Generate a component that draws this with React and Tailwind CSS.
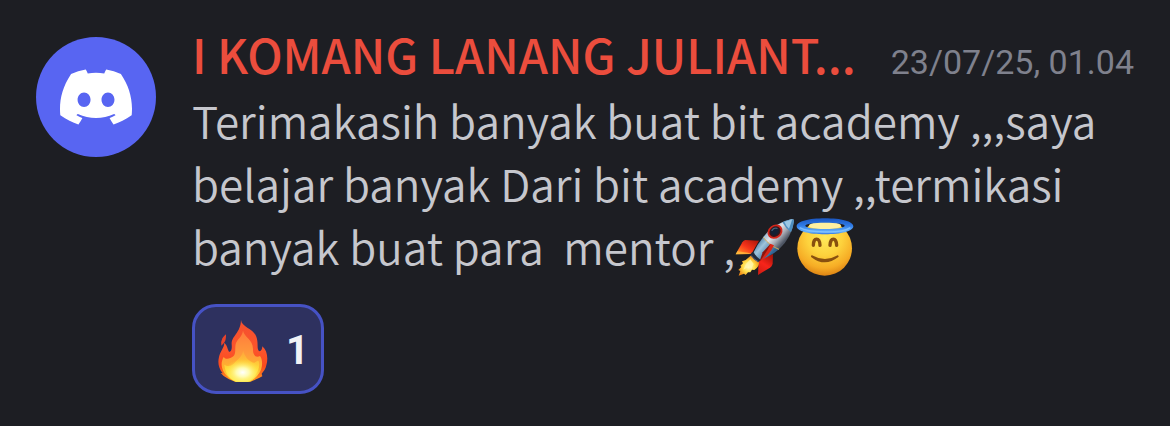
import { SiDiscord } from "react-icons/si";

function Rocket() {
  return (
    <svg role="img" aria-label="rocket" viewBox="45 22 180 180" className="inline-block size-15 align-[-12px]">
      <defs>
        <linearGradient id="hull" gradientUnits="userSpaceOnUse" x1="122" y1="62" x2="178" y2="112">
          <stop offset="0" stopColor="#3f7199" />
          <stop offset="0.2" stopColor="#8fb4cc" />
          <stop offset="0.5" stopColor="#e0e3e8" />
          <stop offset="0.75" stopColor="#a5a9b3" />
          <stop offset="1" stopColor="#4d5563" />
        </linearGradient>
        <linearGradient id="tail" gradientUnits="userSpaceOnUse" x1="100" y1="95" x2="150" y2="138">
          <stop offset="0" stopColor="#2d608c" />
          <stop offset="0.45" stopColor="#9ec4dc" />
          <stop offset="1" stopColor="#2f6492" />
        </linearGradient>
        <linearGradient id="finL" x1="1" y1="0" x2="0" y2="1">
          <stop offset="0.1" stopColor="#b51a0c" />
          <stop offset="0.5" stopColor="#f5331a" />
          <stop offset="0.75" stopColor="#ff6a20" />
          <stop offset="1" stopColor="#ffc53a" />
        </linearGradient>
        <linearGradient id="finR" x1="0.7" y1="0" x2="0.2" y2="1">
          <stop offset="0" stopColor="#a81409" />
          <stop offset="0.5" stopColor="#f8241a" />
          <stop offset="1" stopColor="#cf1d14" />
        </linearGradient>
        <radialGradient id="jet" cx="0.5" cy="0.55" r="0.55">
          <stop offset="0" stopColor="#fffbd0" />
          <stop offset="0.5" stopColor="#ffdf4a" />
          <stop offset="1" stopColor="#f18a14" />
        </radialGradient>
      </defs>
      <path d="M117 93 76 91Q71 92 67 98L47 134 94 133Z" fill="url(#finL)" />
      <path d="M47 134 52 125 84 129 94 133Z" fill="#ffc040" opacity=".7" />
      <path d="M159 133 158 162Q157 168 150 174L114 196 116 153Z" fill="url(#finR)" />
      <path d="M92 138 117 155Q119 172 103 181L96 180 91 188 84 188 77 196 72 192 56 198 61 184 55 181 64 172 61 168 69 161 66 155 77 151Z" fill="url(#jet)" />
      <path d="M78 163 70 180 86 171 94 178 101 163 91 149Z" fill="#fff6ad" opacity=".8" />
      <path d="M91 134Q97 127 104 124L126 145Q122 153 114 158Q99 149 91 134Z" fill="#222a3b" />
      <path d="M93 137 Q101 149 115 156" stroke="#59657e" strokeWidth="3" fill="none" />
      <path d="M101 128Q111 105 130 82L178 118Q156 137 122 151Q108 141 101 128Z" fill="url(#tail)" />
      <path d="M129 83Q157 43 215 28Q222 27 222 35Q215 84 177 119Q149 109 129 83Z" fill="url(#hull)" />
      <path d="M187 38Q203 30 216 28Q222 28 222 34Q220 51 213 68Q197 56 187 38Z" fill="#4e8fc0" />
      <path d="M193 36 217 29 207 57Q198 49 193 36Z" fill="#9bc7e4" />
      <path d="M130 83Q149 109 177 119" fill="none" stroke="#d3ab57" strokeWidth="3" />
      <path d="M151 102 162 107 154 122Q143 139 118 157 130 124Z" fill="#da2618" />
      <path d="M151 103Q146 119 118 157L128 128Z" fill="#8c130c" />
      <ellipse cx="165" cy="66" rx="24" ry="20" transform="rotate(-38 165 66)" fill="#d3261b" />
      <ellipse cx="165" cy="66" rx="18" ry="15" transform="rotate(-38 165 66)" fill="#35171b" />
      <ellipse cx="164" cy="65" rx="13" ry="11" transform="rotate(-38 164 65)" fill="#142033" />
      <path d="M156 62Q161 54 171 56" stroke="#46627b" strokeWidth="4" fill="none" strokeLinecap="round" />
    </svg>
  );
}

function Angel() {
  return (
    <svg role="img" aria-label="smiling face with halo" viewBox="226 22 180 180" className="inline-block size-15 align-[-12px]">
      <defs>
        <radialGradient id="skin" cx="0.5" cy="0.3" r="0.72">
          <stop offset="0" stopColor="#ffe95a" />
          <stop offset="0.45" stopColor="#fdd23d" />
          <stop offset="0.78" stopColor="#f6ac25" />
          <stop offset="1" stopColor="#d97e12" />
        </radialGradient>
        <linearGradient id="halo" x1="0" y1="0" x2="0" y2="1">
          <stop offset="0" stopColor="#1b55be" />
          <stop offset="0.45" stopColor="#2f7be6" />
          <stop offset="0.85" stopColor="#67b3ff" />
          <stop offset="1" stopColor="#2a6de0" />
        </linearGradient>
      </defs>
      <circle cx="315" cy="116" r="82" fill="url(#skin)" />
      <ellipse cx="316" cy="48" rx="48" ry="11" fill="#fff0a0" />
      <path fillRule="evenodd" d="M231 50C231 35 268 26 316 26S401 35 401 50 364 74 316 74 231 65 231 50ZM257 48C257 54 282 58 316 58S375 54 375 48 350 39 316 39 257 42 257 48Z" fill="url(#halo)" />
      <path d="M240 54Q260 66 316 67T392 54" fill="none" stroke="#8ac8ff" strokeWidth="4" opacity=".75" />
      <g fill="none" stroke="#88500f" strokeLinecap="round">
        <path d="M281 107C281 82 300 82 301 107" strokeWidth="10" />
        <path d="M331 107C332 82 350 82 351 107" strokeWidth="10" />
        <path d="M277 140Q316 170 354 140Q316 162 277 140" strokeWidth="6" fill="#88500f" strokeLinejoin="round" />
      </g>
    </svg>
  );
}

function Fire() {
  return (
    <svg role="img" aria-label="fire" viewBox="94 72 180 186" className="h-[62px] w-15">
      <defs>
        <linearGradient id="flame" x1="0" y1="0" x2="0" y2="1">
          <stop offset="0" stopColor="#f4502f" />
          <stop offset="0.5" stopColor="#fb542b" />
          <stop offset="0.75" stopColor="#fa4a1c" />
          <stop offset="1" stopColor="#ff9a20" />
        </linearGradient>
        <linearGradient id="inner" x1="0" y1="0" x2="0" y2="1">
          <stop offset="0" stopColor="#ff7a3c" />
          <stop offset="0.45" stopColor="#ff9a3c" />
          <stop offset="0.75" stopColor="#ffb52d" />
          <stop offset="1" stopColor="#ffe23c" />
        </linearGradient>
        <linearGradient id="glow" x1="0" y1="0" x2="0" y2="1">
          <stop offset="0" stopColor="#ffb53a" stopOpacity="0.4" />
          <stop offset="0.6" stopColor="#ffdc3a" />
          <stop offset="1" stopColor="#fff05a" />
        </linearGradient>
        <radialGradient id="core" cx="0.5" cy="0.6" r="0.55">
          <stop offset="0" stopColor="#ffffff" />
          <stop offset="0.35" stopColor="#fffbb0" />
          <stop offset="1" stopColor="#ffe637" stopOpacity="0" />
        </radialGradient>
      </defs>
      <path d="M133 115Q134 133 126 142 121 148 119 149 117 137 122 127 127 120 133 115Z" fill="#e8432b" />
      <path d="M178 72C180 94 214 96 224 122C230 138 226 153 230 163C235 170 242 162 242 151C257 163 260 187 254 208C252 219 246 226 240 233L242 241Q226 250 207 257H160Q139 250 126 240L117 231 123 232C110 216 108 199 112 183C116 166 128 154 128 140C137 149 138 160 142 167C150 168 151 155 150 145C149 119 177 112 178 72Z" fill="url(#flame)" />
      <path d="M184 104C188 124 214 130 214 159C213 178 223 187 235 180C245 193 242 218 233 231Q221 248 204 257H162Q139 247 128 230C116 212 119 195 126 183C132 192 145 189 155 181C164 172 159 158 162 144C165 130 181 124 184 104Z" fill="url(#inner)" />
      <path d="M184 163C190 183 198 192 211 199C222 204 225 190 231 195C239 219 217 249 199 257H164C139 246 130 227 128 206C139 214 151 210 161 198C173 187 183 179 184 163Z" fill="url(#glow)" />
      <ellipse cx="183" cy="222" rx="50" ry="36" fill="url(#core)" />
    </svg>
  );
}

export default function App() {
  return (
    <main className="min-h-screen bg-[#1d1e23] px-9 pt-[27px] pb-[33px] font-['Noto_Sans_CJK_SC','Noto_Sans',sans-serif]">
      <article className="flex items-start gap-9">
        <div className="mt-[10px] flex size-30 shrink-0 items-center justify-center rounded-full bg-[#5865f2] text-white">
          <SiDiscord size={72} aria-label="Discord" />
        </div>
        <div className="min-w-0 flex-1">
          <header className="flex items-baseline justify-between gap-6 whitespace-nowrap leading-[54px]">
            <h1 className="text-[47px] font-medium text-[#eb4d3d]">I KOMANG LANANG JULIANT...</h1>
            <time className="font-[Roboto,sans-serif] text-[34px] text-[#7f818d]">23/07/25, 01.04</time>
          </header>
          <p className="text-[44px] leading-[63px] font-[350] whitespace-pre-wrap text-[#c6c7cd]">
            {"Terimakasih banyak buat bit academy ,,,saya belajar banyak Dari bit academy ,,termikasi banyak buat para  mentor ,"}
            <Rocket />
            <Angel />
          </p>
          <button type="button" className="mt-[26px] flex h-[90px] w-33 items-center justify-between rounded-3xl border-3 border-[#4652c4] bg-[#2e315f] pt-1 pr-3 pl-4.5 font-[Roboto,sans-serif] text-[40px] font-bold text-[#f1f2f6]">
            <Fire />
            <span>1</span>
          </button>
        </div>
      </article>
    </main>
  );
}
